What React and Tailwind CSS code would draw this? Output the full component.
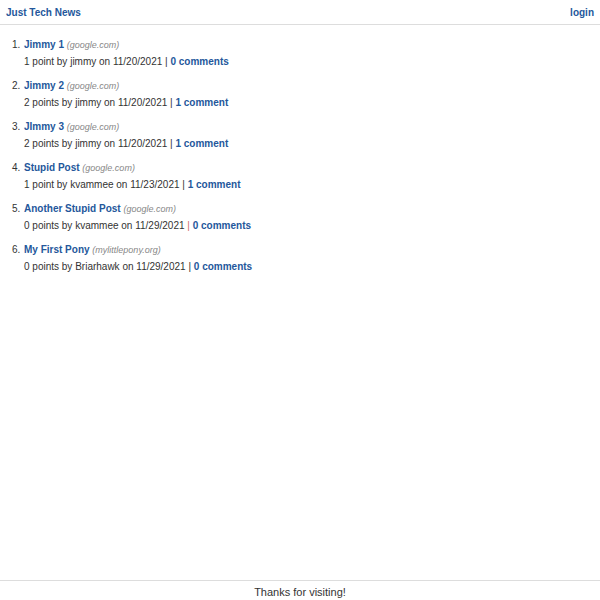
const posts = [
  { title: "Jimmy 1", site: "google.com", points: 1, user: "jimmy", date: "11/20/2021", comments: 0 },
  { title: "Jimmy 2", site: "google.com", points: 2, user: "jimmy", date: "11/20/2021", comments: 1 },
  { title: "JImmy 3", site: "google.com", points: 2, user: "jimmy", date: "11/20/2021", comments: 1 },
  { title: "Stupid Post", site: "google.com", points: 1, user: "kvammee", date: "11/23/2021", comments: 1 },
  { title: "Another Stupid Post", site: "google.com", points: 0, user: "kvammee", date: "11/29/2021", comments: 0, redBar: true },
  { title: "My First Pony", site: "mylittlepony.org", points: 0, user: "Briarhawk", date: "11/29/2021", comments: 0 },
];

export default function App() {
  return (
    <div className="min-h-screen flex flex-col bg-white text-[10px] text-[#333] font-['Liberation_Sans',Arial,sans-serif]">
      <header className="flex justify-between items-center h-[25px] px-1.5 border-b border-[#ddd]">
        <a className="font-bold text-[#24579b]" href="#">Just Tech News</a>
        <a className="font-bold text-[#24579b]" href="#">login</a>
      </header>

      <main className="flex-1 pt-[13px] pl-3">
        <ol className="flex flex-col gap-[11px]">
          {posts.map((p, i) => (
            <li key={i} className="flex leading-[13px]">
              <span className="w-3">{i + 1}.</span>
              <div className="flex flex-col gap-[3px]">
                <div>
                  <a className="font-bold text-[#24579b]" href="#">{p.title}</a>{" "}
                  <span className="italic text-[9px] text-[#888]">({p.site})</span>
                </div>
                <div>
                  {p.points} {p.points === 1 ? "point" : "points"} by {p.user} on {p.date}{" "}
                  <span className={p.redBar ? "text-[#d06a6a]" : ""}>|</span>{" "}
                  <a className="font-bold text-[#24579b]" href="#">
                    {p.comments} {p.comments === 1 ? "comment" : "comments"}
                  </a>
                </div>
              </div>
            </li>
          ))}
        </ol>
      </main>

      <footer className="border-t border-[#ddd] h-[20px] pt-[3px] flex items-center justify-center text-[11px] text-[#333]">
        Thanks for visiting!
      </footer>
    </div>
  );
}
